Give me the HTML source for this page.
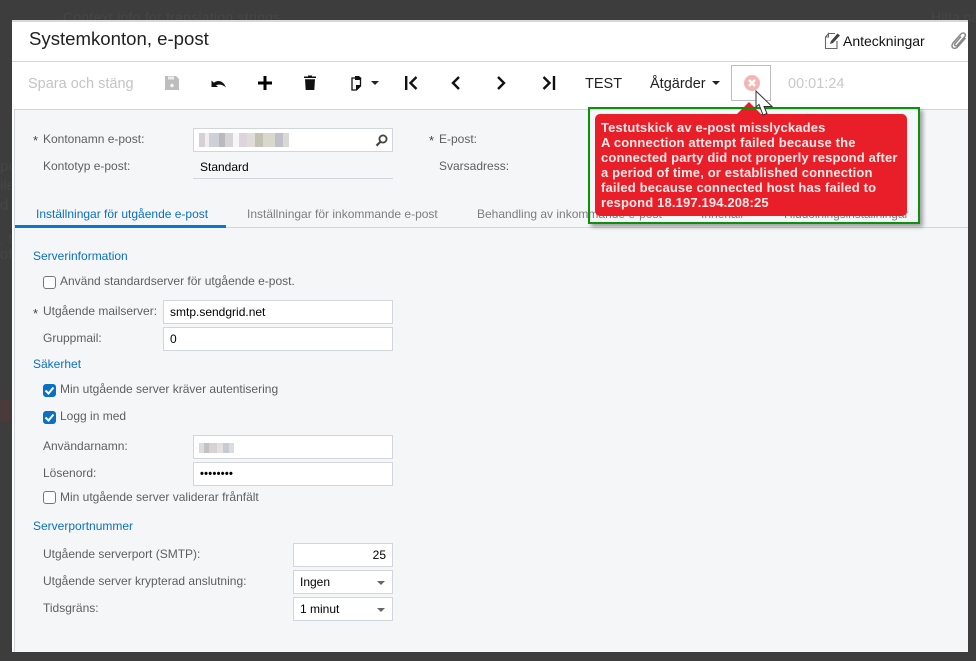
<!DOCTYPE html>
<html><head><meta charset="utf-8">
<style>
*{box-sizing:border-box}
html,body{margin:0;padding:0}
body{width:976px;height:661px;background:#3d3d3d;position:relative;overflow:hidden;font-family:"Liberation Sans",sans-serif;font-size:12px;color:#000}
.a{position:absolute;white-space:nowrap}
.lbl{position:absolute;white-space:nowrap;color:#5f5f5f;font-size:12px;line-height:14px}
.sec{position:absolute;white-space:nowrap;color:#0a70c4;font-size:12px;line-height:14px}
.inp{position:absolute;background:#fff;border:1px solid #d3d5dc;height:24px;line-height:22px;padding-left:6px;font-size:12px;color:#000}
.cb{position:absolute;width:13px;height:13px;border:1px solid #777;border-radius:3px;background:#fff}
.cb.on{background:#0a70c4;border-color:#0a70c4}
.tb{position:absolute;white-space:nowrap;font-size:14.5px;line-height:16px}
.tab{position:absolute;white-space:nowrap;font-size:12px;line-height:14px;color:#7d7d7d}
.st{position:absolute;color:#444;font-size:13px;line-height:14px}
.arr{position:absolute;width:0;height:0;border-left:4px solid transparent;border-right:4px solid transparent;border-top:4px solid #666}
.ghost{position:absolute;white-space:nowrap;color:#464646;font-size:15px}
</style></head><body>

<div class="ghost" style="left:63px;top:9px;font-size:14px;letter-spacing:.25px">Context info for translation strings</div>
<div class="ghost" style="left:931px;top:9px;font-size:14px">Hitta nå</div>
<div class="ghost" style="left:0;top:158px">po</div>
<div class="ghost" style="left:0;top:177px">ile</div>
<div class="ghost" style="left:0;top:197px">d</div>
<div class="ghost" style="left:0;top:231px">. t</div>
<div class="ghost" style="left:0;top:246px">off</div>
<div class="a" style="left:0;top:400px;width:12px;height:21px;background:#4a3a3a"></div>

<!-- panel -->
<div class="a" style="left:12px;top:20px;width:956px;height:632px;background:#fff;border-top:2px solid #d8d8d8"></div>
<div class="a" style="left:12px;top:61px;width:956px;height:1px;background:#d5d5d8"></div>
<div class="a" style="left:14px;top:109px;width:954px;height:543px;background:#f5f6f8;border-left:1px solid #d3d5dc;border-top:1px solid #d3d5dc"></div>

<div class="a" style="left:29px;top:27px;font-size:18.6px;line-height:24px;color:#222">Systemkonton, e-post</div>

<!-- notes -->
<svg class="a" style="left:824px;top:32px" width="18" height="18" viewBox="0 0 18 18" fill="none"><path d="M4.500 1.500H11M1.500 5L4.500 1.500V5H1.500V16.500H13V9" stroke="#666" stroke-width="1.100"/><path d="M6 12L7 9L13.500 1.500L16 3.500L9 11Z" fill="#444"/></svg>
<div class="a" style="left:843px;top:33px;font-size:14px;line-height:16px;color:#111">Anteckningar</div>
<svg class="a" style="left:950px;top:31px" width="18" height="20" viewBox="0 0 18 20" fill="none" stroke="#8a8a8a" stroke-width="1.500"><path d="M15.500 7L8 15.500C6.500 17.500 3.500 18 2.500 16.500C1.500 15 2 13.500 3 12L10.500 3.500C11.500 2 13.500 1.500 14.500 2.500C16 3.500 15.500 5 14.500 6L7.500 14C6.800 15 5.500 15 5 14.500C4.500 14 4.500 13 5.200 12.200L11 5.500"/></svg>

<!-- toolbar -->
<div class="tb" style="left:28px;top:76px;color:#c4c4c4">Spara och stäng</div>
<svg class="a" style="left:165px;top:76px" width="14" height="14" viewBox="0 0 14 14"><path d="M0 0H11L14 3V14H0Z" fill="#bdbdbd"/><rect x="3" y="0.500" width="6" height="3" fill="#ececec"/><circle cx="7" cy="9.500" r="1.800" fill="#f5f5f5"/></svg>
<svg class="a" style="left:211px;top:78px" width="16" height="11" viewBox="0 0 16 11"><path d="M0.500 9V2.500L3 4.800C6 2 12 1.800 15 9.500C12 6.500 8 6 5 7.300L7 9Z" fill="#111"/></svg>
<svg class="a" style="left:258px;top:76px" width="14" height="14" viewBox="0 0 14 14"><path d="M5.500 0H8.500V5.500H14V8.500H8.500V14H5.500V8.500H0V5.500H5.500Z" fill="#000"/></svg>
<svg class="a" style="left:304px;top:75px" width="12" height="15" viewBox="0 0 12 15"><path d="M0 1.500H4V0.500H8V1.500H12V3H0Z" fill="#111"/><path d="M1 4.200H11L10.300 15H1.700Z" fill="#111"/></svg>
<svg class="a" style="left:350px;top:76px" width="13" height="15" viewBox="0 0 13 15"><path d="M2 2H10.500V10L6.500 14H2Z" fill="#fff" stroke="#111" stroke-width="1.300"/><path d="M5 0H9L11.500 2.500L10 4H5Z" fill="#111"/><path d="M6 14L11 9H6Z" fill="#111"/></svg>
<div class="a" style="left:371px;top:81px;width:0;height:0;border-left:4px solid transparent;border-right:4px solid transparent;border-top:4px solid #222"></div>
<svg class="a" style="left:404px;top:76px" width="14" height="14" viewBox="0 0 14 14" fill="none" stroke="#111" stroke-width="2.400"><path d="M2.200 0V14"/><path d="M12.500 1L6.500 7L12.500 13"/></svg>
<svg class="a" style="left:450px;top:76px" width="10" height="14" viewBox="0 0 10 14" fill="none" stroke="#111" stroke-width="2.400"><path d="M9 1L3 7L9 13"/></svg>
<svg class="a" style="left:497px;top:76px" width="10" height="14" viewBox="0 0 10 14" fill="none" stroke="#111" stroke-width="2.400"><path d="M1 1L7 7L1 13"/></svg>
<svg class="a" style="left:542px;top:76px" width="14" height="14" viewBox="0 0 14 14" fill="none" stroke="#111" stroke-width="2.400"><path d="M12 0V14"/><path d="M1.500 1L7.500 7L1.500 13"/></svg>
<div class="tb" style="left:585px;top:76px;color:#222">TEST</div>
<div class="tb" style="left:650px;top:76px;color:#222">Åtgärder</div>
<div class="a" style="left:712px;top:81px;width:0;height:0;border-left:4px solid transparent;border-right:4px solid transparent;border-top:4px solid #222"></div>
<div class="a" style="left:731px;top:65px;width:40px;height:36px;border:1px solid #bdbdbd;background:#fff"></div>
<svg class="a" style="left:744px;top:75px" width="16" height="16" viewBox="0 0 16 16"><circle cx="8" cy="8" r="8" fill="#f4b5b5"/><path d="M5 5L11 11M11 5L5 11" stroke="#fff" stroke-width="2.400"/></svg>
<div class="tb" style="left:788px;top:76px;color:#c8c8c8">00:01:24</div>

<!-- form header -->
<div class="st" style="left:33px;top:134px">*</div>
<div class="lbl" style="left:43px;top:132px">Kontonamn e-post:</div>
<div class="inp" style="left:193px;top:128px;width:200px"></div>
<div class="a" style="left:199px;top:133px;width:90px;height:14px;background:linear-gradient(90deg,#d8cfd2 0 6px,#f0eeef 6px 10px,#cdd0d6 10px 20px,#b9b9be 20px 26px,#d5d5d5 26px 34px,#f6f6f8 34px 40px,#ddd4dd 40px 48px,#e0ddd8 48px 56px,#c4c2b5 56px 64px,#d8d8ce 64px 76px,#c0c0c8 76px 84px,#d8d8d8 84px 90px)"></div>
<svg class="a" style="left:375px;top:134px" width="13" height="13" viewBox="0 0 13 13" fill="none" stroke="#444" stroke-width="1.800"><circle cx="8" cy="5" r="3.600"/><path d="M5.200 8L1.500 11.700" stroke-width="2.200"/></svg>
<div class="lbl" style="left:43px;top:159px">Kontotyp e-post:</div>
<div class="a" style="left:200px;top:160px;line-height:15px">Standard</div>
<div class="a" style="left:193px;top:178px;width:200px;height:1px;background:#d3d5dc"></div>
<div class="st" style="left:429px;top:134px">*</div>
<div class="lbl" style="left:439px;top:132px">E-post:</div>
<div class="lbl" style="left:439px;top:159px">Svarsadress:</div>

<!-- tabs -->
<div class="a" style="left:15px;top:227px;width:953px;height:1px;background:#d3d5dc"></div>
<div class="a" style="left:15px;top:225px;width:211px;height:3px;background:#0a78cc"></div>
<div class="tab" style="left:36px;top:207px;color:#0a70c4">Inställningar för utgående e-post</div>
<div class="tab" style="left:247px;top:207px">Inställningar för inkommande e-post</div>
<div class="tab" style="left:477px;top:207px">Behandling av inkommande e-post</div>
<div class="tab" style="left:701px;top:207px">Innehåll</div>
<div class="tab" style="left:784px;top:207px;letter-spacing:-.1px">Hiddoiningsinställningar</div>

<!-- server -->
<div class="sec" style="left:33px;top:249px">Serverinformation</div>
<div class="cb" style="left:43px;top:276px"></div>
<div class="lbl" style="left:60px;top:274px">Använd standardserver för utgående e-post.</div>
<div class="st" style="left:33px;top:307px">*</div>
<div class="lbl" style="left:43px;top:304px">Utgående mailserver:</div>
<div class="inp" style="left:163px;top:300px;width:230px">smtp.sendgrid.net</div>
<div class="lbl" style="left:43px;top:331px">Gruppmail:</div>
<div class="inp" style="left:163px;top:327px;width:230px">0</div>

<div class="sec" style="left:33px;top:357px">Säkerhet</div>
<div class="cb on" style="left:43px;top:384px"><svg width="11" height="11" style="display:block" viewBox="0 0 11 11" fill="none" stroke="#fff" stroke-width="2"><path d="M1.500 5.500L4.500 8.500L9.500 2.500"/></svg></div>
<div class="lbl" style="left:60px;top:382px">Min utgående server kräver autentisering</div>
<div class="cb on" style="left:43px;top:411px"><svg width="11" height="11" style="display:block" viewBox="0 0 11 11" fill="none" stroke="#fff" stroke-width="2"><path d="M1.500 5.500L4.500 8.500L9.500 2.500"/></svg></div>
<div class="lbl" style="left:60px;top:409px">Logg in med</div>
<div class="lbl" style="left:43px;top:439px">Användarnamn:</div>
<div class="inp" style="left:193px;top:435px;width:200px"></div>
<div class="a" style="left:199px;top:443px;width:35px;height:10px;background:linear-gradient(90deg,#dcdcdc 0 5px,#c0c2c8 5px 10px,#d8d1d4 10px 18px,#e4e0e0 18px 24px,#c6cad2 24px 30px,#dcdcdc 30px 35px)"></div>
<div class="lbl" style="left:43px;top:466px">Lösenord:</div>
<div class="inp" style="left:193px;top:462px;width:200px;font-size:11px;letter-spacing:.3px;font-weight:bold">••••••••</div>
<div class="cb" style="left:43px;top:491px"></div>
<div class="lbl" style="left:60px;top:490px">Min utgående server validerar frånfält</div>

<div class="sec" style="left:33px;top:519px">Serverportnummer</div>
<div class="lbl" style="left:43px;top:547px">Utgående serverport (SMTP):</div>
<div class="inp" style="left:293px;top:543px;width:100px;text-align:right;padding-right:6px">25</div>
<div class="lbl" style="left:43px;top:574px">Utgående server krypterad anslutning:</div>
<div class="inp" style="left:293px;top:570px;width:100px">Ingen</div>
<div class="arr" style="left:377px;top:581px"></div>
<div class="lbl" style="left:43px;top:601px">Tidsgräns:</div>
<div class="inp" style="left:293px;top:597px;width:100px">1 minut</div>
<div class="arr" style="left:377px;top:608px"></div>

<!-- popup -->
<div class="a" style="left:588px;top:107px;width:332px;height:117px;border:2px solid #0a930a;box-shadow:3px 3px 4px rgba(0,0,0,.35)"></div>
<div class="a" style="left:595px;top:114px;width:312px;height:102px;background:#e81f28;border-radius:5px;color:#ffe9e9;font-weight:bold;font-size:13px;line-height:15px;padding:6px 0 0 6px;letter-spacing:.15px">Testutskick av e-post misslyckades<br>A connection attempt failed because the<br>connected party did not properly respond after<br>a period of time, or established connection<br>failed because connected host has failed to<br>respond 18.197.194.208:25</div>
<svg class="a" style="left:737px;top:102px" width="24" height="12" viewBox="0 0 24 12"><path d="M12 0L24 12H0Z" fill="#e81f28"/></svg>
<div class="a" style="left:590px;top:107px;width:328px;height:2px;background:#0a930a"></div>

<!-- cursor -->
<svg class="a" style="left:755px;top:90px" width="20" height="28" viewBox="0 0 20 28"><path d="M1 1V17L4 14.500L8 25L12 23.500L9 16.500H17Z" fill="#fff" stroke="#333" stroke-width="1"/></svg>
</body></html>
